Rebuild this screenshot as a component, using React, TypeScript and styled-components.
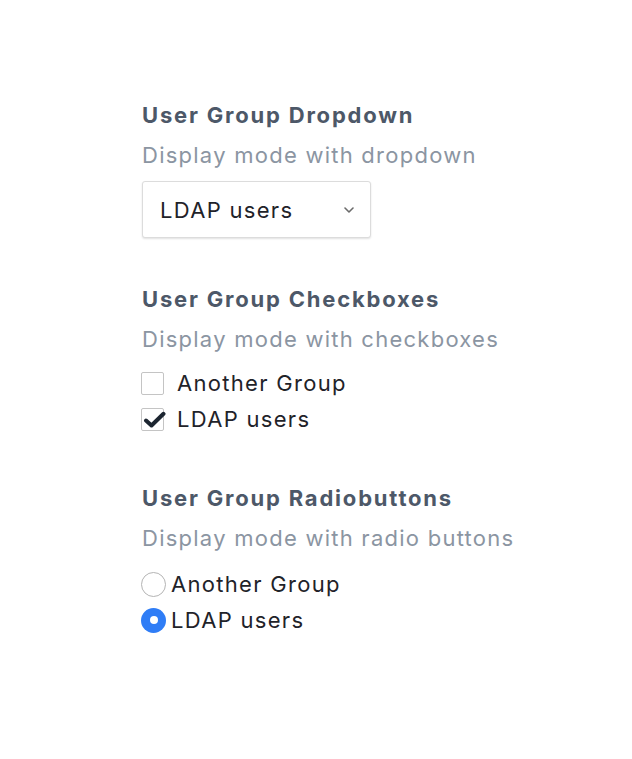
import React from "react";
import styled, { createGlobalStyle } from "styled-components";

const Global = createGlobalStyle`
  html, body { margin: 0; padding: 0; background: #ffffff; }
  body { font-family: Inter, "Liberation Sans", Arial, sans-serif; }
`;

const Page = styled.div`
  display: flex;
  flex-direction: column;
  padding: 95px 0 0 142px;
  min-height: 759px;
  box-sizing: border-box;
`;

const Section = styled.section<{ $gap?: number }>`
  display: flex;
  flex-direction: column;
  align-items: flex-start;
  margin-top: ${(p) => p.$gap ?? 0}px;
`;

const Title = styled.h2`
  margin: 0;
  font-size: 22px;
  line-height: 40px;
  font-weight: 700;
  letter-spacing: 1.8px;
  color: #4d5868;
`;

const Subtitle = styled.p`
  margin: 0;
  font-size: 22px;
  line-height: 40px;
  font-weight: 400;
  letter-spacing: 1.25px;
  color: #8b95a2;
`;

const Select = styled.div`
  margin-top: 6px;
  width: 229px;
  height: 57px;
  box-sizing: border-box;
  display: flex;
  align-items: center;
  justify-content: space-between;
  padding: 0 16px 0 17px;
  border: 1px solid #dcdcdc;
  border-radius: 3px;
  background: #ffffff;
  box-shadow: 0 1px 2px rgba(0, 0, 0, 0.12);
  font-size: 22px;
  letter-spacing: 1.3px;
  color: #1f2329;
`;

const OptionList = styled.div<{ $top: number }>`
  margin-top: ${(p) => p.$top}px;
  display: flex;
  flex-direction: column;
  margin-left: -1px;
`;

const OptionRow = styled.label<{ $gap: number }>`
  display: flex;
  align-items: center;
  gap: ${(p) => p.$gap}px;
  height: 36px;
  font-size: 22px;
  letter-spacing: 1.3px;
  color: #1f2329;
`;

const Box = styled.span`
  position: relative;
  flex: none;
  width: 23px;
  height: 23px;
  box-sizing: border-box;
  border: 1px solid #c4c4c4;
  border-radius: 2px;
  background: #fff;
`;

const Radio = styled.span<{ $checked?: boolean }>`
  flex: none;
  width: 25px;
  height: 25px;
  box-sizing: border-box;
  border-radius: 50%;
  border: ${(p) => (p.$checked ? "none" : "1px solid #b4b4b4")};
  background: ${(p) => (p.$checked ? "#2f7df6" : "#fff")};
  display: flex;
  align-items: center;
  justify-content: center;
`;

const Dot = styled.span`
  width: 8px;
  height: 8px;
  border-radius: 50%;
  background: #fff;
`;

const CheckMark = styled.svg`
  position: absolute;
  left: 1px;
  top: 2px;
`;

const Chevron = () => (
  <svg width="10" height="6" viewBox="0 0 10 6">
    <path d="M1 1 L5 5 L9 1" fill="none" stroke="#6b6b6b" strokeWidth="1.6" strokeLinecap="round" strokeLinejoin="round" />
  </svg>
);

const Check = () => (
  <CheckMark width="23" height="18" viewBox="0 0 23 18">
    <path d="M3 9.5 L8.5 14.5 L20.5 2.8" fill="none" stroke="#1c2530" strokeWidth="4" strokeLinecap="round" strokeLinejoin="round" />
  </CheckMark>
);

export default function App() {
  return (
    <>
      <Global />
      <Page>
        <Section>
          <Title>User Group Dropdown</Title>
          <Subtitle>Display mode with dropdown</Subtitle>
          <Select>
            <span>LDAP users</span>
            <Chevron />
          </Select>
        </Section>
        <Section $gap={41}>
          <Title>User Group Checkboxes</Title>
          <Subtitle>Display mode with checkboxes</Subtitle>
          <OptionList $top={6}>
            <OptionRow $gap={13}>
              <Box />
              Another Group
            </OptionRow>
            <OptionRow $gap={13}>
              <Box>
                <Check />
              </Box>
              LDAP users
            </OptionRow>
          </OptionList>
        </Section>
        <Section $gap={41}>
          <Title>User Group Radiobuttons</Title>
          <Subtitle>Display mode with radio buttons</Subtitle>
          <OptionList $top={8}>
            <OptionRow $gap={5}>
              <Radio />
              Another Group
            </OptionRow>
            <OptionRow $gap={5}>
              <Radio $checked>
                <Dot />
              </Radio>
              LDAP users
            </OptionRow>
          </OptionList>
        </Section>
      </Page>
    </>
  );
}
